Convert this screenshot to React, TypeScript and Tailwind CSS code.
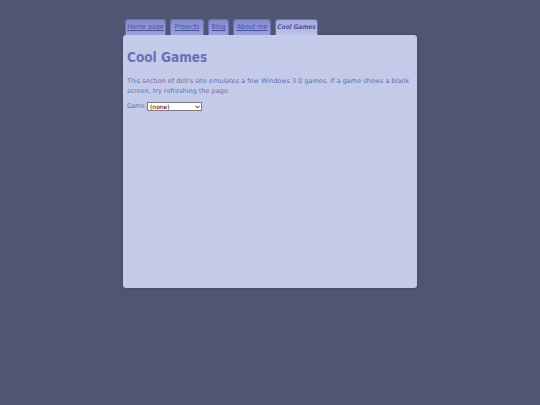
const tabs = [
  { label: 'Home page', w: 'w-[41px]' },
  { label: 'Projects', w: 'w-[34px]' },
  { label: 'Blog', w: 'w-[21px]' },
  { label: 'About me', w: 'w-[38px]' },
];

const condensed = { fontFamily: '"Comic Sans MS", "DejaVu Sans Condensed", "DejaVu Sans", sans-serif' };

export default function App() {
  return (
    <div className="min-h-[405px] w-full bg-[#4e5674] pt-[19px]" style={{ fontFamily: '"Comic Sans MS", "DejaVu Sans", sans-serif' }}>
      <div className="mx-auto w-[294px]">
        <div className="flex gap-[4px] pl-[2px] h-[16px] items-end" style={condensed}>
          {tabs.map(t => (
            <div key={t.label} className={`${t.w} h-[16px] rounded-t-[3px] bg-gradient-to-b from-[#838bd0] to-[#9aa2dc] border-x border-t border-[#6b72b0] flex items-center justify-center`}>
              <span className="text-[7px] text-[#4a52a0] underline whitespace-nowrap">{t.label}</span>
            </div>
          ))}
          <div className="w-[43px] h-[16px] rounded-t-[3px] bg-gradient-to-b from-[#a3abe0] to-[#bcc4e8] border-x border-t border-[#6b72b0] flex items-center justify-center">
            <span className="text-[6.5px] text-[#4e56a0] italic font-bold whitespace-nowrap">Cool Games</span>
          </div>
        </div>
        <div className="h-[253px] rounded-[3px] bg-[#c3cbe9] px-[4px] pt-[12px] shadow-[0_0_2px_rgba(0,0,0,0.3)]">
          <h1 className="text-[13.5px] font-semibold text-[#6a70b8] leading-[20px]" style={condensed}>Cool Games</h1>
          <p className="mt-[9px] text-[6.5px] leading-[10px] text-[#6a6eae]">
            This section of dell's site <em>emulates</em> a few Windows 3.0 games. If a game shows a blank screen, try refreshing the page.
          </p>
          <div className="mt-[6px] flex items-center gap-[1px] text-[6.5px] text-[#6a6eae]">
            <span className="whitespace-nowrap w-[19px]" style={condensed}>Game:</span>
            <div className="relative w-[55px] h-[9px]">
              <select className="appearance-none w-full h-full bg-white border border-[#7a7a7a] text-[6px] text-black leading-none px-[2px] py-0" style={{ fontFamily: '"DejaVu Sans", sans-serif' }}>
                <option>(none)</option>
              </select>
              <svg className="absolute right-[2px] top-[2.5px] pointer-events-none" width="5" height="4" viewBox="0 0 5 4">
                <path d="M0.5 0.8 L2.5 3 L4.5 0.8" fill="none" stroke="#222" strokeWidth="1" />
              </svg>
            </div>
          </div>
        </div>
      </div>
    </div>
  );
}
